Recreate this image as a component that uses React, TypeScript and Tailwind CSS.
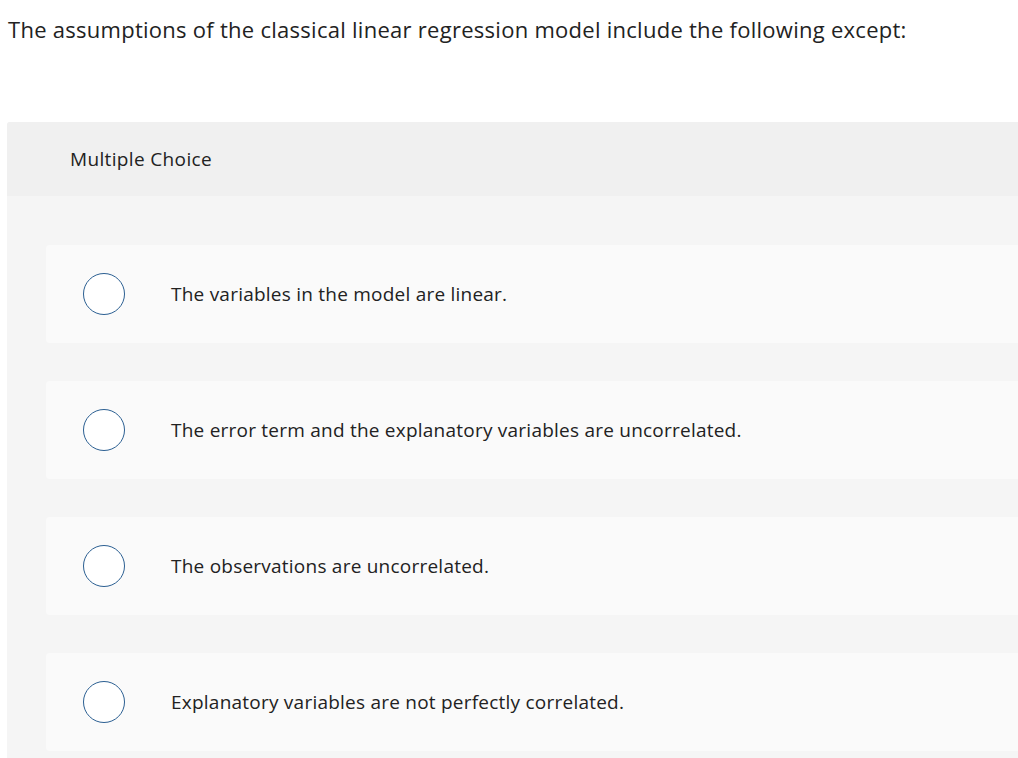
import React from "react";

const options = [
  "The variables in the model are linear.",
  "The error term and the explanatory variables are uncorrelated.",
  "The observations are uncorrelated.",
  "Explanatory variables are not perfectly correlated.",
];

export default function App() {
  return (
    <div
      className="w-[1018px] h-[758px] overflow-hidden bg-white text-[#222222]"
      style={{ fontFamily: "'Open Sans', sans-serif" }}
    >
      <div className="pl-[8px] pt-[14px] h-[122px]">
        <p className="text-[22px] leading-[30px] tracking-[0.27px]">
          The assumptions of the classical linear regression model include the following except:
        </p>
      </div>
      <div className="ml-[7px] h-[636px] bg-[#f5f5f5] rounded-tl-[3px]">
        <div className="h-[74px] bg-[#f0f0f0] rounded-tl-[3px] flex items-center pl-[63px]">
          <span className="text-[19px] leading-[24px] tracking-[0.35px]">Multiple Choice</span>
        </div>
        <div className="pt-[49px] pl-[39px] flex flex-col gap-[38px]">
          {options.map((o) => (
            <div
              key={o}
              className="h-[98px] bg-[#fafafa] rounded-l-[4px] flex items-center"
            >
              <div className="ml-[37px] w-[42px] h-[42px] rounded-full border-[1.5px] border-[#2b5f92] bg-white shrink-0" />
              <span className="ml-[46px] text-[19px] leading-[24px] tracking-[0.23px]">{o}</span>
            </div>
          ))}
        </div>
      </div>
    </div>
  );
}
